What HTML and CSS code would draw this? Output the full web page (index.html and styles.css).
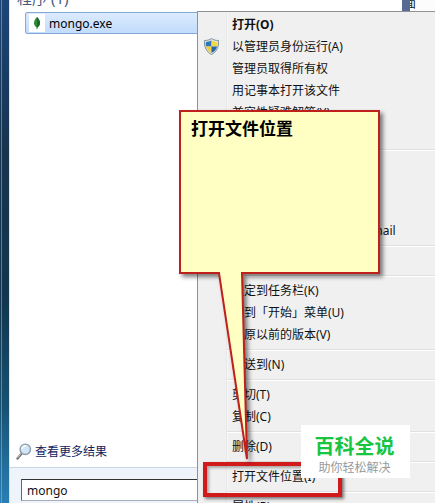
FILE: index.html
```html
<!DOCTYPE html>
<html lang="zh-CN">
<head>
    <meta charset="UTF-8">
    <meta name="viewport" content="width=device-width, initial-scale=1.0">
    <title>打开文件位置</title>
    <link rel="stylesheet" href="styles.css">
</head>
<body>

    <div class="desktop">
        <main class="start-menu">
            <section class="results">
                <h2 class="group-title">程序 (1)</h2>
                <button class="program">
                    <span class="program-icon">
                        <svg width="6" height="12" viewBox="0 0 6 12">
                            <path d="M3 0C5 2 6 4 6 6C6 8 5 9 3.5 10.5V12H2.5V10.5C1 9 0 8 0 6C0 4 1 2 3 0Z" fill="#2f8a38"/>
                            <path d="M3 0C5 2 6 4 6 6C6 8 5 9 3.5 10.5H3Z" fill="#1c6a2c"/>
                        </svg>
                    </span>
                    mongo.exe
                </button>
            </section>

            <a class="more-results" href="#">
                <svg width="16" height="17" viewBox="0 0 16 17">
                    <path d="M6 10L1.5 15.5" stroke="#77736f" stroke-width="2.4" stroke-linecap="round"/>
                    <path d="M5.6 9.8L1.6 14.8" stroke="#c9c5c0" stroke-width="1"/>
                    <circle cx="9.3" cy="6.3" r="5.2" fill="#cfe6f6" stroke="#8e9bab" stroke-width="1.4"/>
                    <path d="M6 6A3.5 3.5 0 0 1 10 3" fill="none" stroke="#fff" stroke-width="1.6"/>
                </svg>
                查看更多结果
            </a>

            <div class="search-bar">
                <input class="search-input" type="text" value="mongo" aria-label="搜索程序和文件">
            </div>
        </main>

        <aside class="background-window">面</aside>

        <nav class="context-menu">
            <button class="menu-item default">打开(O)</button>
            <button class="menu-item">
                <svg class="shield" width="15" height="17" viewBox="0 0 15 17">
                    <path d="M7.5 0.5C9.5 2 12 2.5 14.5 2.5C15 9 12.5 14 7.5 16.5C2.5 14 0 9 0.5 2.5C3 2.5 5.5 2 7.5 0.5Z" fill="#e4e8eb" stroke="#7e8d9a" stroke-width="1"/>
                    <path d="M7.5 2.2V8.5H2C1.7 7 1.7 5.5 1.8 3.9C4 3.9 5.8 3.3 7.5 2.2Z" fill="#2f78b8"/>
                    <path d="M7.5 2.2V8.5H13C13.3 7 13.3 5.5 13.2 3.9C11 3.9 9.2 3.3 7.5 2.2Z" fill="#f2d64c"/>
                    <path d="M7.5 8.5V15C4.5 13.5 2.6 11.4 2 8.5Z" fill="#f0ce3e"/>
                    <path d="M7.5 8.5V15C10.5 13.5 12.4 11.4 13 8.5Z" fill="#2468ab"/>
                </svg>
                以管理员身份运行(A)
            </button>
            <button class="menu-item">管理员取得所有权</button>
            <button class="menu-item">用记事本打开该文件</button>
            <button class="menu-item">兼容性疑难解答(Y)</button>
            <button class="menu-item"></button>
            <hr>
            <button class="menu-item"></button>
            <button class="menu-item"></button>
            <button class="menu-item"></button>
            <button class="menu-item">压缩到 “mongo.exe” 并 E-mail</button>
            <hr>
            <button class="menu-item"></button>
            <hr>
            <button class="menu-item">锁定到任务栏(K)</button>
            <button class="menu-item">附到「开始」菜单(U)</button>
            <button class="menu-item">还原以前的版本(V)</button>
            <hr>
            <button class="menu-item">发送到(N)</button>
            <hr>
            <button class="menu-item">剪切(T)</button>
            <button class="menu-item">复制(C)</button>
            <hr>
            <button class="menu-item">删除(D)</button>
            <hr>
            <button class="menu-item">打开文件位置(I)</button>
            <hr>
            <button class="menu-item">属性(R)</button>
        </nav>

        <div class="highlight"></div>

        <div class="callout">
            <svg class="callout-shape" width="204" height="354" viewBox="0 0 204 354">
                <path d="M2 2H201V164H64L69 350L41 164H2Z" fill="#ffffc4" stroke="#c0201c" stroke-width="2"/>
            </svg>
            <p class="callout-text">打开文件位置</p>
        </div>

        <div class="watermark">
            <strong>百科全说</strong>
            <span>助你轻松解决</span>
        </div>
    </div>

</body>
</html>
```

FILE: styles.css
```css
* {
    box-sizing: border-box;
    margin: 0;
    padding: 0;
}

body {
    font-family: "Noto Sans", "Noto Sans CJK SC", sans-serif;
    font-size: 12px;
    color: #111;
    overflow: hidden;
}

button,
input {
    font: inherit;
    color: inherit;
}

.desktop {
    position: relative;
    height: 100vh;
    overflow: hidden;
    padding-left: 9px;
    background: linear-gradient(#1d4577, #17344f 30%, #12364f 60%, #17506f 80%, #2a7fb4);
}

/* light edges of the window frame */
.desktop::before {
    content: "";
    position: absolute;
    left: 1px;
    top: 0;
    bottom: 0;
    width: 7px;
    border-left: 1px solid rgba(160, 195, 220, 0.5);
    border-right: 1px solid rgba(160, 195, 220, 0.4);
}

/* Start menu */
.start-menu {
    display: flex;
    flex-direction: column;
    height: 100%;
    background: #fff;
}

.results {
    flex: 1;
    padding: 0 16px;
}

.group-title {
    display: flex;
    align-items: flex-end;
    height: 12px;
    padding-bottom: 4px;
    margin-left: -8px;
    font-size: 15px;
    font-weight: normal;
    line-height: 20px;
    color: #46587c;
}

.program {
    display: flex;
    align-items: center;
    gap: 4px;
    width: 100%;
    height: 22px;
    padding: 0 3px;
    border: 1px solid #84a9d6;
    border-radius: 2px;
    background: linear-gradient(#dcebfd, #c2dcfc);
    color: #000;
}

.program-icon {
    display: flex;
    align-items: center;
    justify-content: center;
    width: 16px;
    height: 18px;
    background: #fff;
}

.more-results {
    display: flex;
    align-items: center;
    gap: 3px;
    height: 32px;
    padding-left: 7px;
    color: #0d2360;
    text-decoration: none;
}

.search-bar {
    height: 36px;
    padding: 11px 12px 0;
    border-top: 1px solid #cbd5e3;
    background: #eff4fb;
}

.search-input {
    width: 100%;
    height: 22px;
    padding: 0 5px;
    border: 1px solid #a5adb8;
    border-top-color: #333;
    border-left-color: #666;
    background: #fff;
    outline: none;
}

.background-window {
    position: absolute;
    top: 0;
    left: 402px;
    right: 0;
    height: 11px;
    overflow: hidden;
    border-left: 8px solid #566b92;
    background: #fcfcfc;
    line-height: 8px;
    text-indent: -6px;
}

/* Context menu */
.context-menu {
    position: absolute;
    top: 11px;
    left: 197px;
    right: 0;
    padding: 2px 0;
    border-top: 1px solid #8f9398;
    border-left: 1px solid #8f9398;
    background: linear-gradient(90deg, transparent 28px, #e8e8e8 28px, #e8e8e8 29px, #f6f6f6 29px, #f6f6f6 30px, transparent 30px) #f0f0f0;
}

.menu-item {
    display: flex;
    align-items: center;
    position: relative;
    width: 100%;
    height: 22px;
    padding: 0 0 2px 34px;
    border: none;
    background: none;
    white-space: nowrap;
    text-align: left;
}

.menu-item.default {
    font-weight: bold;
}

.shield {
    position: absolute;
    left: 6px;
    top: 2px;
}

.context-menu hr {
    height: 2px;
    margin: 3px 0 3px 29px;
    border: none;
    border-top: 1px solid #e0e0e0;
    border-bottom: 1px solid #fff;
}

/* Annotations */
.highlight {
    position: absolute;
    left: 203px;
    top: 462px;
    width: 139px;
    height: 35px;
    border: 4px solid #d01a1c;
    box-shadow: 2px 2px 3px rgba(0, 0, 0, 0.5), inset 2px 2px 3px rgba(0, 0, 0, 0.3);
}

.callout {
    position: absolute;
    left: 178px;
    top: 109px;
    width: 204px;
}

.callout-shape {
    position: absolute;
    overflow: visible;
    filter: drop-shadow(3px 3px 2px rgba(0, 0, 0, 0.5));
}

.callout-text {
    position: relative;
    padding: 7px 13px;
    font-family: "Noto Sans CJK SC", sans-serif;
    font-size: 17px;
    font-weight: bold;
    line-height: 24px;
    color: #000;
}

.watermark {
    position: absolute;
    left: 301px;
    top: 425px;
    width: 109px;
    padding: 8px 2px 4px 0;
    background: #fff;
    text-align: center;
    font-family: "Noto Sans CJK SC", sans-serif;
}

.watermark strong {
    display: block;
    font-size: 20px;
    line-height: 26px;
    color: #18c540;
}

.watermark span {
    display: block;
    line-height: 15px;
    color: #999;
}
```
